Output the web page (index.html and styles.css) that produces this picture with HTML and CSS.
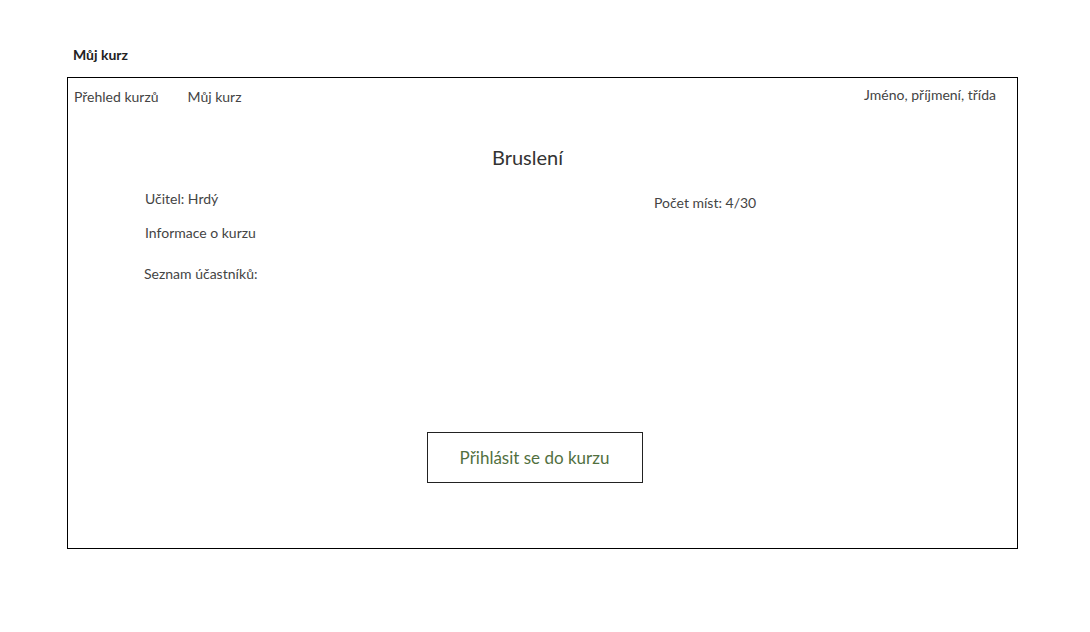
FILE: index.html
```html
<!DOCTYPE html>
<html lang="cs">
<head>
<meta charset="utf-8">
<title>Můj kurz</title>
<link rel="stylesheet" href="styles.css">
</head>
<body>
<main class="page">
  <h1 class="page-title">Můj kurz</h1>
  <section class="frame">
    <header class="topbar">
      <nav class="nav">
        <a class="nav-link">Přehled kurzů</a>
        <a class="nav-link">Můj kurz</a>
      </nav>
      <div class="user">Jméno, příjmení, třída</div>
    </header>
    <h2 class="course-title">Bruslení</h2>
    <div class="info">
      <div class="info-left">
        <p class="teacher">Učitel: Hrdý</p>
        <p class="about">Informace o kurzu</p>
        <p class="participants">Seznam účastníků:</p>
      </div>
      <div class="info-right">
        <p class="seats">Počet míst: 4/30</p>
      </div>
    </div>
    <div class="actions">
      <button class="join">Přihlásit se do kurzu</button>
    </div>
  </section>
</main>
</body>
</html>
```
FILE: styles.css
```css
* { box-sizing: border-box; }
html, body { margin: 0; padding: 0; background: #fff; }
body {
  font-family: "Lato", "Open Sans", sans-serif;
  color: #444;
  font-size: 14px;
}
.page {
  padding: 46px 0 0 67px;
  width: 1018px;
}
.page-title {
  margin: 0 0 13px 6px;
  font-size: 14px;
  font-weight: 700;
  line-height: 18px;
  color: #222;
}
.frame {
  border: 1px solid #000;
  height: 472px;
  display: flex;
  flex-direction: column;
}
.topbar {
  display: flex;
  justify-content: space-between;
  padding: 10px 21px 0 6px;
  line-height: 18px;
}
.nav { display: flex; gap: 29px; }
.nav-link { color: #444; text-decoration: none; }
.user { margin-top: -2px; }
.course-title {
  margin: 39px 0 0 0;
  padding-right: 30px;
  text-align: center;
  font-size: 20px;
  font-weight: 400;
  line-height: 24px;
  color: #333;
}
.info {
  display: grid;
  grid-template-columns: 509px 1fr;
  padding-left: 77px;
  margin-top: 21px;
}
.info p { margin: 0; line-height: 18px; }
.about { margin-top: 16px !important; }
.participants { margin-top: 23px !important; margin-left: -1px !important; }
.seats { margin-top: 4px !important; }
.actions {
  display: flex;
  justify-content: center;
  padding-right: 16px;
  margin-top: 149px;
}
.join {
  width: 216px;
  height: 51px;
  border: 1px solid #222;
  background: #fff;
  color: #52703f;
  font-family: inherit;
  font-size: 17px;
  padding: 0;
}
```
